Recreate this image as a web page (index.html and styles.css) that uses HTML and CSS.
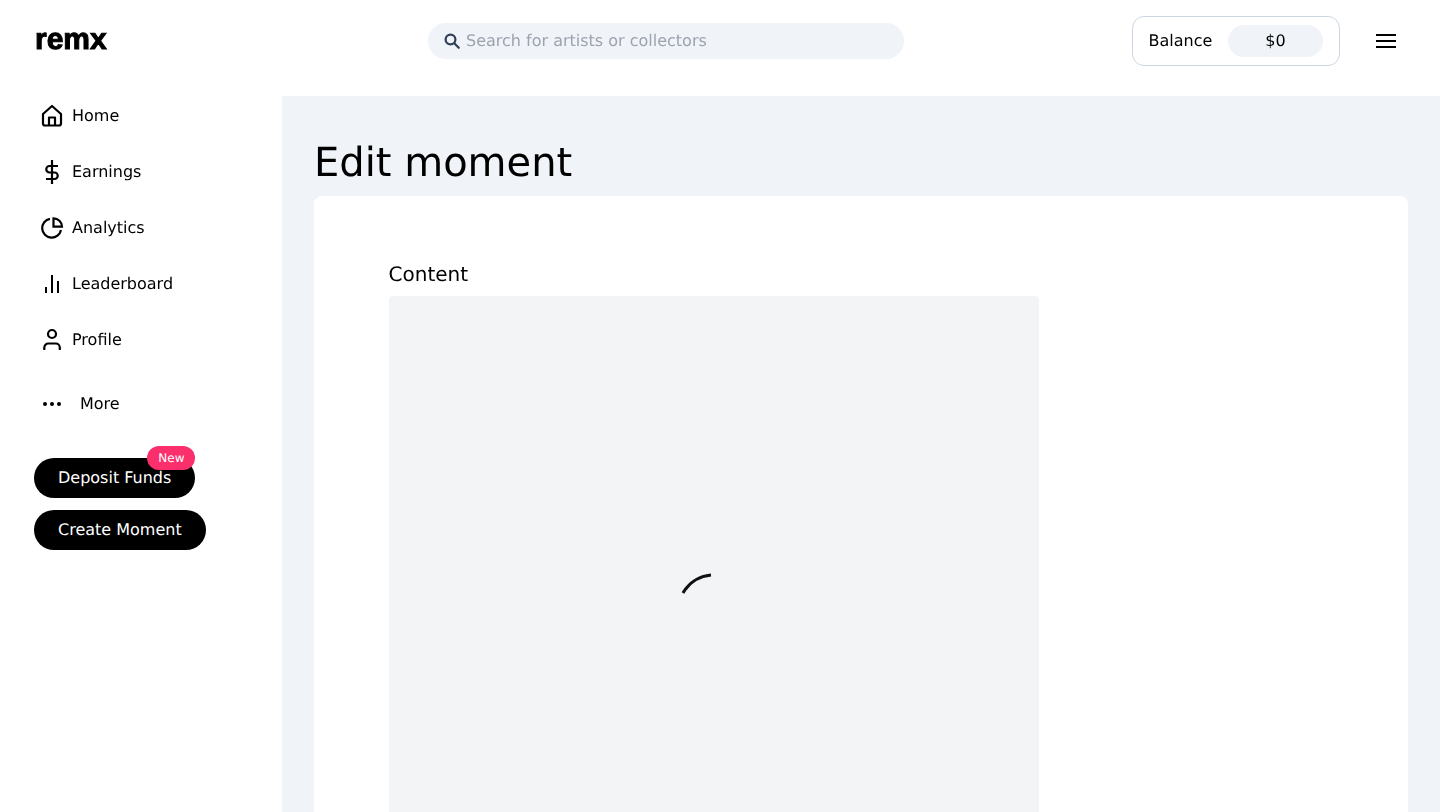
FILE: index.html
```html
<!DOCTYPE html>
<html lang="en">
<head>
  <meta charset="UTF-8">
  <meta name="viewport" content="width=device-width, initial-scale=1.0">
  <title>Edit moment</title>
  <link rel="stylesheet" href="styles.css">
</head>
<body>

<header class="topbar">
  <div class="logo">remx</div>
  <div class="search">
    <svg class="search-icon" viewBox="0 0 24 24" width="18" height="18" fill="none" stroke="#334155" stroke-width="3" stroke-linecap="round"><circle cx="10" cy="10" r="6.5"/><path d="M15 15l6 6"/></svg>
    <span class="search-text">Search for artists or collectors</span>
  </div>
  <div class="balance">
    <span>Balance</span>
    <span class="balance-value">$0</span>
  </div>
  <button class="menu-btn" aria-label="Menu">
    <svg viewBox="0 0 20 16" width="20" height="16" fill="none" stroke="#000" stroke-width="2"><path d="M0 2h20M0 8h20M0 14h20"/></svg>
  </button>
</header>

<div class="layout">
  <nav class="sidebar">
    <a class="nav-item">
      <svg viewBox="0 0 24 24" width="24" height="24" fill="none" stroke="#000" stroke-width="2.200" stroke-linejoin="round"><path d="M3 10l9-8 9 8v9.500a2 2 0 0 1-2 2H5a2 2 0 0 1-2-2z"/><path d="M9 21.500v-8h6v8"/></svg>
      <span>Home</span>
    </a>
    <a class="nav-item">
      <svg viewBox="0 0 24 24" width="24" height="24" fill="none" stroke="#000" stroke-width="2.200"><path d="M12 0v24"/><path d="M18 6H9.500a3.250 3.250 0 0 0 0 6.500h5a3.250 3.250 0 0 1 0 6.500H6"/></svg>
      <span>Earnings</span>
    </a>
    <a class="nav-item">
      <svg viewBox="0 0 24 24" width="24" height="24" fill="none" stroke="#000" stroke-width="2.200"><path d="M10 2.800A9.500 9.500 0 1 0 21 14"/><path d="M13.500 2.300a8.500 8.500 0 0 1 8.500 8.400h-8.500z"/></svg>
      <span>Analytics</span>
    </a>
    <a class="nav-item">
      <svg viewBox="0 0 24 24" width="24" height="24" fill="none" stroke="#000" stroke-width="2"><path d="M6 15v6M12 3v18M18 9v12"/></svg>
      <span>Leaderboard</span>
    </a>
    <a class="nav-item">
      <svg viewBox="0 0 24 24" width="24" height="24" fill="none" stroke="#000" stroke-width="2.200"><circle cx="12" cy="6" r="4"/><path d="M4.300 22v-2.500a4 4 0 0 1 4-4h7.500a4 4 0 0 1 4 4V22"/></svg>
      <span>Profile</span>
    </a>
    <a class="nav-item nav-more">
      <svg viewBox="0 0 24 24" width="24" height="24" fill="#000"><circle cx="5" cy="12" r="2"/><circle cx="12" cy="12" r="2"/><circle cx="19" cy="12" r="2"/></svg>
      <span>More</span>
    </a>
    <div class="actions">
      <button class="pill">Deposit Funds<span class="badge">New</span></button>
      <button class="pill">Create Moment</button>
    </div>
  </nav>

  <main class="main">
    <h1>Edit moment</h1>
    <section class="card">
      <div class="field-label">Content</div>
      <div class="media">
        <svg class="spinner" viewBox="0 0 80 80" width="80" height="80" fill="none" stroke="#111" stroke-width="3"><path d="M9 22A36 36 0 0 1 37 4"/></svg>
      </div>
    </section>
  </main>
</div>

</body>
</html>
```

FILE: styles.css
```css
* { box-sizing: border-box; }
html, body { height: 100%; }
body { margin: 0; height: 812px; overflow: hidden; background-color: #ffffff; color: #000; font-family: "DejaVu Sans", sans-serif; font-size: 16px; text-rendering: geometricPrecision; }

.topbar { display: flex; align-items: center; height: 81px; padding-left: 36px; will-change: opacity; }
.logo { width: 392px; padding-bottom: 2px; margin-left: -1px; margin-right: 1px; font-family: "Liberation Sans", Arial, sans-serif; font-weight: 700; font-size: 30px; line-height: 1; -webkit-text-stroke: 1px #000; }
.search { display: flex; align-items: center; width: 476px; height: 36px; padding-left: 15px; border-radius: 18px; background-color: #f0f3f8; }
.search-icon { flex: none; }
.search-text { margin-left: 5px; font-size: 16px; color: #9ca3af; }
.balance { display: flex; align-items: center; justify-content: space-between; width: 208px; height: 50px; margin-left: auto; padding: 0 16px 0 15.5px; border: 1px solid #cbd5e1; border-radius: 12px; }
.balance-value { display: flex; align-items: center; justify-content: center; width: 95px; height: 32px; border-radius: 16px; background-color: #f0f3f8; }
.menu-btn { display: flex; align-items: center; justify-content: center; width: 20px; height: 16px; margin: 0 44px 0 36px; padding: 0; border: none; background: none; }

.layout { display: flex; height: 731px; will-change: opacity; }
.sidebar { flex: none; width: 282px; padding: 7px 0 0 34px; }
.nav-item { display: flex; align-items: center; gap: 8px; height: 56px; padding-left: 6px; }
.nav-item span { padding-bottom: 2px; }
.nav-more { gap: 16px; margin-top: 8px; }
.actions { display: flex; flex-direction: column; align-items: flex-start; gap: 12px; margin-top: 26px; }
.pill { position: relative; height: 40px; padding: 0 24px 2px; border: none; border-radius: 20px; background-color: #000; color: #fff; font-family: inherit; font-size: 16px; text-rendering: inherit; }
.badge { position: absolute; top: -12px; right: 0; width: 48px; height: 24px; border-radius: 12px; background-color: #fb2f6c; color: #fff; font-size: 12px; line-height: 24px; text-align: center; }

.main { flex: 1; margin-top: 15px; background-color: #f0f3f8; padding: 0 32px; }
h1 { margin: 37px 0 0; font-size: 40px; font-weight: 400; line-height: 60px; height: 63px; }
.card { padding: 62px 75px 0; border-radius: 8px 8px 0 0; background-color: #fff; height: 700px; }
.field-label { margin-left: -0.5px; font-size: 20px; line-height: 32px; height: 38px; }
.media { display: flex; align-items: center; justify-content: center; width: 650px; height: 630px; border-radius: 4px; background-color: #f3f4f6; }
```
